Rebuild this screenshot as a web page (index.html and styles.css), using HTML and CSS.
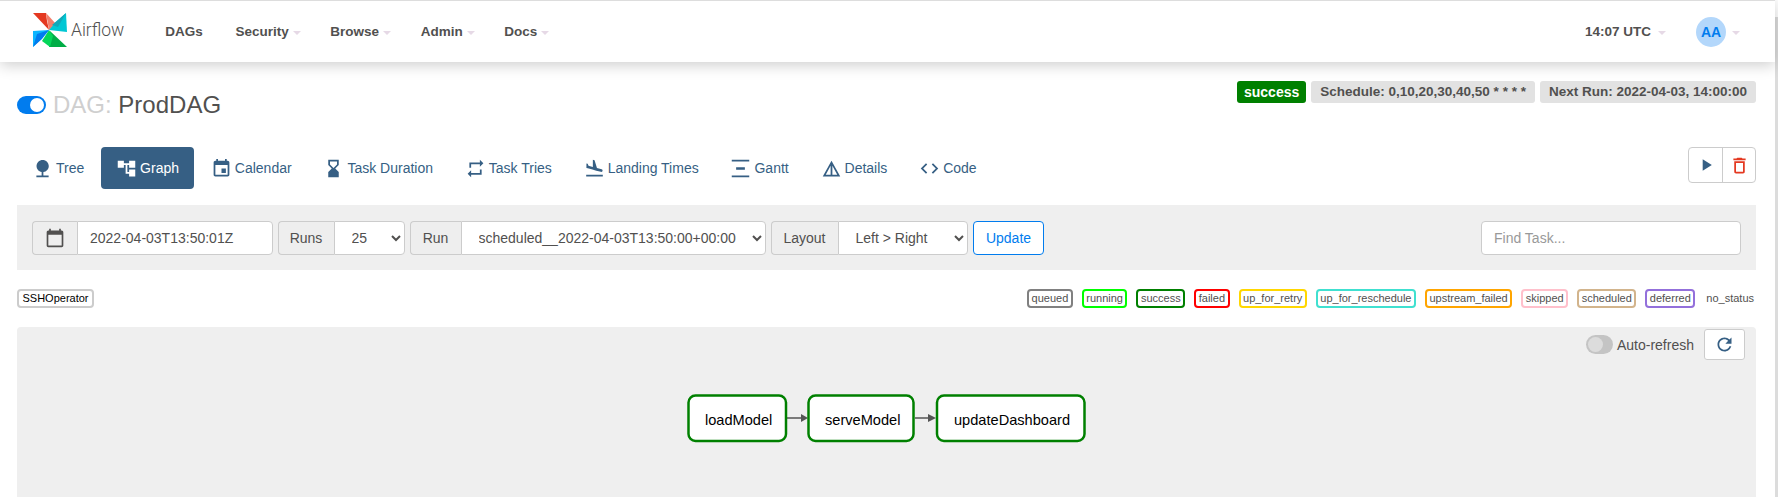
FILE: index.html
```html
<!DOCTYPE html>
<html lang="en">
<head>
    <meta charset="UTF-8">
    <title>Airflow - ProdDAG</title>
    <link rel="stylesheet" href="styles.css">
</head>
<body>
    <div class="page">
        <nav class="navbar">
            <a href="#" class="brand">
                <svg class="logo" width="38" height="38" viewBox="32 10 38 38">
                    <polygon points="33,12 46,12 47,20 49,29" fill="#e43921"></polygon>
                    <polygon points="46,12 56,23 49,29" fill="#f37e6b"></polygon>
                    <polygon points="66,12 67,31 49,29 56,21" fill="#00c7d4"></polygon>
                    <polygon points="66,12 52,24 58,26" fill="#11a8b8"></polygon>
                    <polygon points="67,46 49,46 50,30" fill="#00ad46"></polygon>
                    <polygon points="49,29 42,40 50,46 53,35" fill="#04d659"></polygon>
                    <polygon points="33,46 33,30 49,29 41,38" fill="#0cb6ff"></polygon>
                    <polygon points="33,46 37,33 49,29 42,38" fill="#017cee"></polygon>
                </svg>
                <span class="brand-name">Airflow</span>
            </a>
            <ul class="nav-links">
                <li class="nav-link nav-link-first">DAGs</li>
                <li class="nav-link">Security<span class="caret"></span></li>
                <li class="nav-link">Browse<span class="caret"></span></li>
                <li class="nav-link">Admin<span class="caret"></span></li>
                <li class="nav-link">Docs<span class="caret"></span></li>
            </ul>
            <div class="nav-right">
                <span class="nav-link clock">14:07 UTC<span class="caret"></span></span>
                <span class="avatar">AA</span><span class="caret"></span>
            </div>
        </nav>

        <main class="main">
            <div class="title-row">
                <h1 class="dag-title">
                    <span class="switch switch-on"></span>
                    <span><span class="dag-prefix">DAG:</span> ProdDAG</span>
                </h1>
                <div class="labels">
                    <span class="label label-success">success</span>
                    <span class="label">Schedule: 0,10,20,30,40,50 * * * *</span>
                    <span class="label">Next Run: 2022-04-03, 14:00:00</span>
                </div>
            </div>

            <div class="tab-row">
                <ul class="tabs">
                    <li class="tab"><svg class="icon" viewBox="0 0 24 24"><path d="M13 16.12c3.47-.41 6.17-3.36 6.17-6.95 0-3.87-3.13-7-7-7s-7 3.13-7 7c0 3.47 2.52 6.34 5.83 6.89V20H5v2h14v-2h-6v-3.88z"></path></svg>Tree</li>
                    <li class="tab tab-active"><svg class="icon" viewBox="0 0 24 24"><path d="M22 11V3h-7v3H9V3H2v8h7V8h2v10h4v3h7v-8h-7v3h-2V8h2v3z"></path></svg>Graph</li>
                    <li class="tab"><svg class="icon" viewBox="0 0 24 24"><path d="M17 12h-5v5h5v-5zM16 1v2H8V1H6v2H5c-1.11 0-1.99.9-1.99 2L3 19c0 1.1.89 2 2 2h14c1.1 0 2-.9 2-2V5c0-1.1-.9-2-2-2h-1V1h-2zm3 18H5V8h14v11z"></path></svg>Calendar</li>
                    <li class="tab"><svg class="icon" viewBox="0 0 24 24"><path d="M18 22l-.01-6L14 12l3.99-4.01L18 2H6v6l4 4-4 3.99V22h12zM8 7.5V4h8v3.5l-4 4-4-4z"></path></svg>Task Duration</li>
                    <li class="tab"><svg class="icon" viewBox="0 0 24 24"><path d="M7 7h10v3l4-4-4-4v3H5v6h2V7zm10 10H7v-3l-4 4 4 4v-3h12v-6h-2v4z"></path></svg>Task Tries</li>
                    <li class="tab"><svg class="icon" viewBox="0 0 24 24"><path d="M2.5 19h19v2h-19zm7.18-5.73l4.35 1.16 5.31 1.42c.8.21 1.62-.26 1.84-1.06.21-.8-.26-1.62-1.06-1.84l-5.31-1.42-2.76-9.02L10.12 2v8.28L5.15 8.95l-.93-2.32-1.45-.39v5.17l1.6.43 5.31 1.43z"></path></svg>Landing Times</li>
                    <li class="tab"><svg class="icon" viewBox="0 0 24 24"><path d="M22 2v2H2V2h20zM7 10.5v3h10v-3H7zM2 20v2h20v-2H2z"></path></svg>Gantt</li>
                    <li class="tab"><svg class="icon" viewBox="0 0 24 24"><path d="M12 3L2 21h20L12 3zm1 5.92L18.6 19H13V8.92zm-2 0V19H5.4L11 8.92z"></path></svg>Details</li>
                    <li class="tab"><svg class="icon" viewBox="0 0 24 24"><path d="M9.4 16.6L4.8 12l4.6-4.6L8 6l-6 6 6 6 1.4-1.4zm5.2 0l4.6-4.6-4.6-4.6L16 6l6 6-6 6-1.4-1.4z"></path></svg>Code</li>
                </ul>
                <div class="btn-group">
                    <button class="btn-icon"><svg class="icon icon-play" viewBox="0 0 24 24"><path d="M8 5v14l11-7z"></path></svg></button>
                    <button class="btn-icon"><svg class="icon icon-delete" viewBox="0 0 24 24"><path d="M6 19c0 1.1.9 2 2 2h8c1.1 0 2-.9 2-2V7H6v12zM8 9h8v10H8V9zm7.5-5l-1-1h-5l-1 1H5v2h14V4z"></path></svg></button>
                </div>
            </div>

            <form class="filter-bar">
                <div class="input-group">
                    <span class="addon addon-calendar"><svg class="icon icon-calendar" viewBox="0 0 24 24"><path d="M20 3h-1V1h-2v2H7V1H5v2H4c-1.1 0-2 .9-2 2v16c0 1.1.9 2 2 2h16c1.1 0 2-.9 2-2V5c0-1.1-.9-2-2-2zm0 18H4V8h16v13z"></path></svg></span>
                    <input class="field field-date" type="text" value="2022-04-03T13:50:01Z">
                </div>
                <div class="input-group">
                    <span class="addon addon-runs">Runs</span>
                    <select class="field field-runs"><option>25</option></select>
                </div>
                <div class="input-group">
                    <span class="addon addon-run">Run</span>
                    <select class="field field-run"><option>scheduled__2022-04-03T13:50:00+00:00</option></select>
                </div>
                <div class="input-group">
                    <span class="addon addon-layout">Layout</span>
                    <select class="field field-layout"><option>Left &gt; Right</option></select>
                </div>
                <button type="button" class="btn-update">Update</button>
                <input class="field field-search" type="text" placeholder="Find Task...">
            </form>

            <div class="legend">
                <span class="operator">SSHOperator</span>
                <div class="states">
                    <span class="state state-queued">queued</span>
                    <span class="state state-running">running</span>
                    <span class="state state-success">success</span>
                    <span class="state state-failed">failed</span>
                    <span class="state state-retry">up_for_retry</span>
                    <span class="state state-reschedule">up_for_reschedule</span>
                    <span class="state state-upstream">upstream_failed</span>
                    <span class="state state-skipped">skipped</span>
                    <span class="state state-scheduled">scheduled</span>
                    <span class="state state-deferred">deferred</span>
                    <span class="state state-none">no_status</span>
                </div>
            </div>

            <section class="graph-panel">
                <div class="refresh-row">
                    <span class="switch switch-off"></span>
                    <span class="refresh-label">Auto-refresh</span>
                    <button class="btn-refresh"><svg class="icon" viewBox="0 0 24 24"><path d="M17.65 6.35C16.2 4.9 14.21 4 12 4c-4.42 0-7.99 3.58-7.99 8s3.57 8 7.99 8c3.73 0 6.84-2.55 7.73-6h-2.08c-.82 2.33-3.04 4-5.65 4-3.31 0-6-2.69-6-6s2.69-6 6-6c1.66 0 3.14.69 4.22 1.78L13 11h7V4l-2.35 2.35z"></path></svg></button>
                </div>
                <svg class="graph" width="1739" height="137" viewBox="0 0 1739 137">
                    <line class="edge" x1="770" y1="58" x2="786" y2="58"></line>
                    <polygon class="edge-head" points="784,54 791,58 784,62"></polygon>
                    <line class="edge" x1="898" y1="58" x2="913" y2="58"></line>
                    <polygon class="edge-head" points="911,54 919,58 911,62"></polygon>
                    <rect class="node" x="671.5" y="35.5" width="97.5" height="45.5" rx="7"></rect>
                    <text class="node-label" x="688" y="65">loadModel</text>
                    <rect class="node" x="791.5" y="35.5" width="105" height="45.5" rx="7"></rect>
                    <text class="node-label" x="808" y="65">serveModel</text>
                    <rect class="node" x="920" y="35.5" width="147.5" height="45.5" rx="7"></rect>
                    <text class="node-label" x="937" y="65">updateDashboard</text>
                </svg>
            </section>
        </main>
    </div>
    <div class="scroll-strip"></div>
</body>
</html>
```

FILE: styles.css
```css
* {
    box-sizing: border-box;
}

html, body {
    height: 100%;
}

body {
    font-family: 'Liberation Sans', Arial, sans-serif;
    font-size: 14px;
    margin: 0;
    padding: 0;
    background-color: white;
    color: #51504f;
    display: flex;
    overflow: hidden;
}

.page {
    flex: 1;
    min-width: 0;
    display: flex;
    flex-direction: column;
}

.scroll-strip {
    width: 3px;
    margin-top: 17px;
    background-color: #dcdcdc;
}

/* top bar */
.navbar {
    height: 62px;
    flex-shrink: 0;
    display: flex;
    align-items: center;
    border-top: 1px solid #ddd;
    padding: 0 35px 0 32px;
    background-color: white;
    box-shadow: 0 3px 14px rgba(0, 0, 0, 0.2);
    position: relative;
}

.brand {
    display: flex;
    align-items: center;
    text-decoration: none;
    margin-top: -3px;
}

.brand-name {
    font-family: Roboto, sans-serif;
    font-size: 17.5px;
    font-weight: 300;
    color: #51504f;
    margin-left: 1px;
}

.nav-links {
    list-style: none;
    display: flex;
    margin: 0 0 0 41px;
    padding: 0;
}

.nav-link {
    font-weight: bold;
    font-size: 13.5px;
    margin-right: 29.6px;
    display: flex;
    align-items: center;
}

.nav-link-first {
    margin-right: 32.6px;
}

.caret {
    display: inline-block;
    width: 0;
    height: 0;
    margin-left: 4px;
    margin-top: 2px;
    border-top: 4px solid #e6d9e6;
    border-left: 4px solid transparent;
    border-right: 4px solid transparent;
}

.nav-right {
    margin-left: auto;
    display: flex;
    align-items: center;
}

.clock {
    margin-right: 30px;
}

.clock .caret {
    margin-left: 7px;
}

.avatar {
    width: 30px;
    height: 30px;
    border-radius: 50%;
    background-color: #b3d7fb;
    color: #017cee;
    font-weight: bold;
    display: flex;
    align-items: center;
    justify-content: center;
}

.avatar + .caret {
    margin-left: 6px;
}

/* header row */
.main {
    flex: 1;
    min-height: 0;
    display: flex;
    flex-direction: column;
    padding: 0 19px 0 17px;
}

.title-row {
    display: flex;
    justify-content: space-between;
    align-items: flex-start;
    padding-top: 19px;
    height: 85px;
}

.dag-title {
    margin: 9px 0 0 0;
    font-size: 24px;
    font-weight: normal;
    line-height: 30px;
    display: flex;
    align-items: center;
}

.dag-prefix {
    color: #cfcfcf;
}

.switch {
    display: inline-block;
    width: 29px;
    height: 18px;
    border-radius: 9px;
    position: relative;
}

.switch::after {
    content: '';
    position: absolute;
    top: 2px;
    width: 14px;
    height: 14px;
    border-radius: 50%;
}

.switch-on {
    background-color: #017cee;
    margin-right: 7px;
}

.switch-on::after {
    right: 2px;
    background-color: white;
}

.switch-off {
    background-color: #c4c4c4;
    width: 27px;
    height: 19px;
    border-radius: 10px;
}

.switch-off::after {
    left: 2px;
    top: 2px;
    width: 15px;
    height: 15px;
    background-color: #dcdcdc;
}

.labels {
    display: flex;
    gap: 5px;
}

.label {
    height: 22px;
    line-height: 22px;
    padding: 0 9px;
    border-radius: 3px;
    background-color: #e2e2e2;
    font-size: 13.5px;
    font-weight: bold;
}

.label-success {
    background-color: #008000;
    color: white;
    padding: 0 7px;
    font-size: 14px;
}

/* tabs */
.tab-row {
    display: flex;
    justify-content: space-between;
    align-items: flex-start;
    height: 42px;
}

.tabs {
    list-style: none;
    display: flex;
    gap: 1.8px;
    margin: 0;
    padding: 0;
}

.tab {
    height: 42px;
    padding: 0 15px;
    display: flex;
    align-items: center;
    gap: 3px;
    border-radius: 4px;
    color: #365f84;
}

.tab-active {
    background-color: #365f84;
    color: white;
}

.icon {
    width: 21px;
    height: 21px;
    fill: currentColor;
    flex-shrink: 0;
}

.btn-group {
    display: flex;
    height: 36px;
    border: 1px solid #ccc;
    border-radius: 4px;
}

.btn-icon {
    width: 33px;
    padding: 0;
    border: 0;
    background: none;
    display: flex;
    align-items: center;
    justify-content: center;
}

.btn-icon + .btn-icon {
    border-left: 1px solid #ccc;
}

.icon-play {
    color: #365f84;
    width: 20px;
    height: 20px;
}

.icon-delete {
    color: #e43921;
}

/* filter bar */
.filter-bar {
    margin-top: 16px;
    height: 65px;
    flex-shrink: 0;
    display: flex;
    align-items: center;
    gap: 5px;
    padding: 0 15px;
    background-color: #efefef;
}

.input-group {
    display: flex;
    height: 34px;
}

.addon {
    display: flex;
    align-items: center;
    justify-content: center;
    background-color: #eee;
    border: 1px solid #ccc;
    border-right: 0;
    border-radius: 4px 0 0 4px;
}

.addon-calendar {
    width: 45px;
}

.addon-runs {
    width: 56px;
}

.addon-run {
    width: 51px;
}

.addon-layout {
    width: 67px;
}

.icon-calendar {
    width: 20px;
    height: 20px;
}

.field {
    height: 34px;
    padding: 0 12px;
    border: 1px solid #ccc;
    border-radius: 0 4px 4px 0;
    background-color: white;
    color: #51504f;
    font-family: inherit;
    font-size: 14px;
}

select.field {
    padding: 0 13px;
}

.field-date {
    width: 195.5px;
}

.field-runs {
    width: 71px;
}

.field-run {
    width: 305px;
}

.field-layout {
    width: 130.5px;
}

.field-search {
    width: 260px;
    margin-left: auto;
    border-radius: 4px;
}

.field-search::placeholder {
    color: #999;
}

.btn-update {
    width: 71px;
    height: 34px;
    border: 1px solid #017cee;
    border-radius: 4px;
    background-color: white;
    color: #017cee;
    font-family: inherit;
    font-size: 14px;
}

/* legend */
.legend {
    height: 57px;
    flex-shrink: 0;
    display: flex;
    justify-content: space-between;
    align-items: center;
}

.operator {
    height: 19px;
    line-height: 15px;
    padding: 0 3.5px;
    border: 2px solid #ccc;
    border-radius: 4px;
    font-size: 11px;
    color: #000;
}

.states {
    display: flex;
    gap: 9px;
}

.state {
    height: 19px;
    line-height: 15px;
    padding: 0 2.5px;
    border: 2px solid #000;
    border-radius: 4px;
    font-size: 11px;
}

.state-queued { border-color: gray; }
.state-running { border-color: lime; }
.state-success { border-color: green; }
.state-failed { border-color: red; }
.state-retry { border-color: gold; }
.state-reschedule { border-color: turquoise; }
.state-upstream { border-color: orange; }
.state-skipped { border-color: pink; }
.state-scheduled { border-color: tan; }
.state-deferred { border-color: mediumpurple; }
.state-none { border-color: transparent; padding: 0; }

/* graph */
.graph-panel {
    flex: 1;
    min-height: 0;
    background-color: #efefef;
    border-radius: 4px 4px 0 0;
    padding-top: 2px;
    overflow: hidden;
}

.refresh-row {
    height: 31px;
    display: flex;
    align-items: center;
    justify-content: flex-end;
    padding-right: 11px;
}

.refresh-label {
    margin: 0 10px 0 4px;
}

.btn-refresh {
    width: 41px;
    height: 31px;
    padding: 0;
    border: 1px solid #ccc;
    border-radius: 3px;
    background-color: white;
    color: #365f84;
    display: flex;
    align-items: center;
    justify-content: center;
}

.graph {
    display: block;
}

.node {
    fill: white;
    stroke: green;
    stroke-width: 2.5;
}

.node-label {
    font-family: 'Liberation Sans', Arial, sans-serif;
    font-size: 14.6px;
    fill: #000;
}

.edge {
    stroke: #555;
    stroke-width: 1.5;
}

.edge-head {
    fill: #555;
}
```
